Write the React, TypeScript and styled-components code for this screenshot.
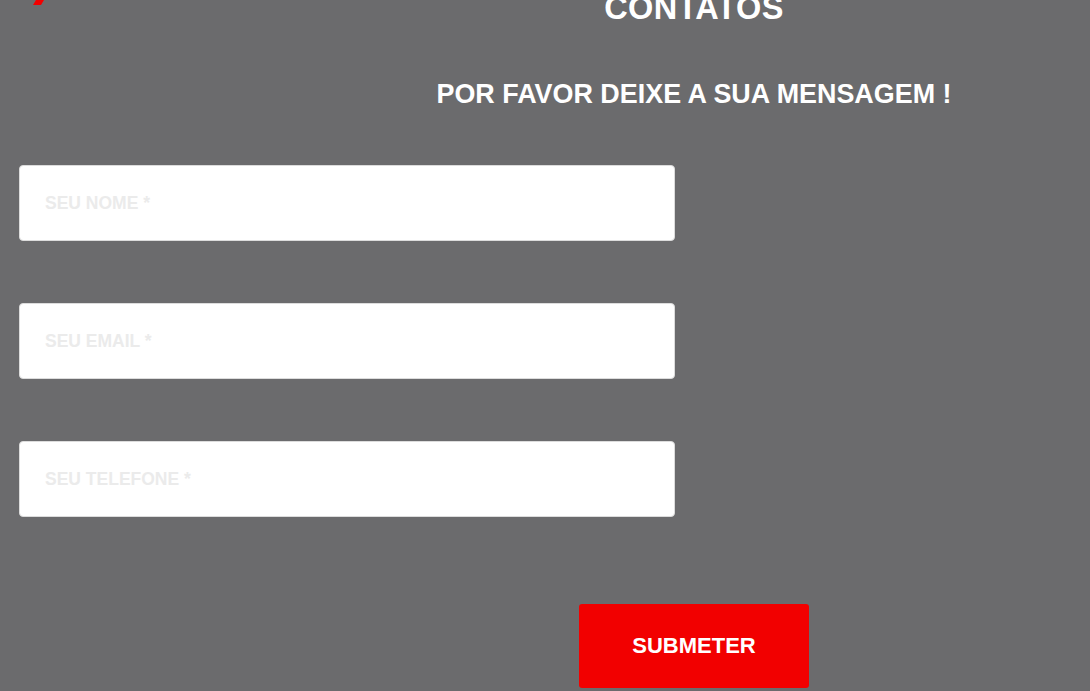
import * as React from "react";
import styled, { createGlobalStyle } from "styled-components";

const GlobalStyle = createGlobalStyle`
  html, body {
    margin: 0;
    padding: 0;
    background: #6b6b6d;
    overflow: hidden;
  }
  body {
    font-family: "Liberation Sans", Arial, sans-serif;
  }
`;

const Page = styled.div`
  width: 1090px;
  height: 691px;
  background: #6b6b6d;
  overflow: hidden;
`;

const Header = styled.header`
  display: grid;
  grid-template-columns: 298px 1fr;
  margin-top: -8px;
`;

const LogoMark = styled.svg`
  display: block;
`;

const Title = styled.h1`
  margin: 0;
  font-size: 32.5px;
  line-height: 32px;
  font-weight: 700;
  color: #ffffff;
  text-align: center;
  letter-spacing: 0.3px;
`;

const Subtitle = styled.h2`
  margin: 57px 0 0 298px;
  font-size: 26.9px;
  line-height: 27px;
  font-weight: 700;
  color: #ffffff;
  text-align: center;
`;

const Form = styled.form`
  display: flex;
  flex-direction: column;
  padding-left: 19px;
  margin-top: 57px;
`;

const Fields = styled.div`
  display: flex;
  flex-direction: column;
  gap: 62px;
  width: 656px;
`;

const Field = styled.input`
  box-sizing: border-box;
  height: 76px;
  width: 100%;
  padding: 0 25px;
  border: 1px solid #dcdcdc;
  border-radius: 4px;
  background: #ffffff;
  font-family: "Liberation Sans", Arial, sans-serif;
  font-size: 17.5px;
  font-weight: 700;
  color: #333;
  outline: none;
  &::placeholder {
    color: #ebebeb;
    text-transform: uppercase;
  }
`;

const Actions = styled.div`
  display: flex;
  justify-content: center;
  padding-left: 279px;
  margin-top: 87px;
`;

const Submit = styled.button`
  width: 230px;
  height: 84px;
  border: none;
  border-radius: 3px;
  background: #f20000;
  color: #ffffff;
  font-family: "Liberation Sans", Arial, sans-serif;
  font-size: 22px;
  font-weight: 700;
  text-transform: uppercase;
  cursor: pointer;
`;

export default function App() {
  return (
    <>
      <GlobalStyle />
      <Page>
        <Header>
          <LogoMark width="60" height="14" viewBox="0 0 60 14">
            <polygon points="40.8,0 48.8,0 41,13 33,13" fill="#f20000" />
          </LogoMark>
          <Title>CONTATOS</Title>
        </Header>
        <Subtitle>POR FAVOR DEIXE A SUA MENSAGEM !</Subtitle>
        <Form onSubmit={(e) => e.preventDefault()}>
          <Fields>
            <Field type="text" name="nome" placeholder="SEU NOME *" />
            <Field type="email" name="email" placeholder="SEU EMAIL *" />
            <Field type="tel" name="telefone" placeholder="SEU TELEFONE *" />
          </Fields>
          <Actions>
            <Submit type="submit">Submeter</Submit>
          </Actions>
        </Form>
      </Page>
    </>
  );
}
